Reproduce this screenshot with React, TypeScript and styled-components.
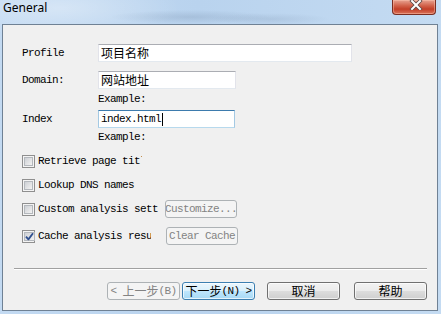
import React from 'react';
import styled, { createGlobalStyle } from 'styled-components';

const GlobalStyle = createGlobalStyle`
  html, body {
    margin: 0;
    padding: 0;
  }
  body {
    width: 441px;
    height: 314px;
    overflow: hidden;
    background: #bcd4ec;
  }
`;

const MONO = `"Liberation Mono", "Noto Sans CJK SC", monospace`;
const HAN = `"Noto Sans CJK SC", "Liberation Mono", sans-serif`;

const Window = styled.div`
  width: 441px;
  height: 314px;
  box-sizing: border-box;
  padding: 0 3px 3px 2px;
  display: flex;
  flex-direction: column;
  background:
    radial-gradient(ellipse 80px 7px at 190px 17px, rgba(70, 90, 120, .16), transparent),
    radial-gradient(ellipse 60px 6px at 270px 19px, rgba(70, 90, 120, .12), transparent),
    radial-gradient(ellipse 120px 30px at 60px 8px, rgba(255, 255, 255, .35), transparent),
    linear-gradient(90deg, #c3daf2 0%, #b9d3ee 45%, #c4dbf2 100%);
`;

const TitleBar = styled.div`
  height: 24px;
  display: flex;
  align-items: flex-start;
  justify-content: space-between;
`;

const Title = styled.div`
  font-family: "Noto Sans", "Open Sans", sans-serif;
  font-size: 12px;
  line-height: 16px;
  color: #000;
  padding: 0 0 0 1px;
`;

const CloseButton = styled.div`
  box-sizing: border-box;
  width: 44px;
  height: 15px;
  margin-right: 2px;
  border: 1px solid #7a2e22;
  border-top: none;
  border-radius: 0 0 4px 4px;
  background: linear-gradient(180deg, #e8a392 0%, #d2634c 40%, #c33f28 65%, #d9735a 100%);
  box-shadow: inset 0 0 0 1px rgba(255, 200, 180, .45);
  display: flex;
  justify-content: center;
  align-items: flex-start;
  padding-left: 3px;
`;

const Client = styled.div`
  flex: 1;
  background: #f0f0f0;
  border: 1px solid #6f8194;
  display: flex;
  flex-direction: column;
  padding: 0 10px 0 19px;
  font-family: ${MONO};
  font-size: 11px;
  letter-spacing: -0.6px;
  color: #000;
`;

const FieldRow = styled.div<{ $top: number }>`
  display: flex;
  align-items: center;
  height: 18px;
  margin-top: ${p => p.$top}px;
`;

const Label = styled.div`
  width: 76px;
  white-space: nowrap;
`;

const TextBox = styled.div<{ $width: number; $focused?: boolean }>`
  box-sizing: border-box;
  width: ${p => p.$width}px;
  height: 18px;
  background: #fff;
  border: 1px solid;
  border-color: ${p =>
    p.$focused ? '#3d7bad #a4c9e3 #b7d9ed #a4c9e3' : '#abadb3 #e2e3ea #e3e9ef #e2e3ea'};
  padding-left: 2px;
  display: flex;
  align-items: center;
  white-space: nowrap;
`;

const Han = styled.span<{ $size?: number }>`
  font-family: ${HAN};
  font-size: ${p => p.$size ?? 12}px;
  letter-spacing: 0;
  line-height: 1;
`;

const Caret = styled.span`
  display: inline-block;
  width: 1px;
  height: 13px;
  margin-left: 1px;
  background: #000;
`;

const Hint = styled.div<{ $top: number }>`
  margin: ${p => p.$top}px 0 0 76px;
  height: 14px;
  line-height: 14px;
`;

const CheckRow = styled.div<{ $top: number }>`
  display: flex;
  align-items: center;
  height: 22px;
  margin-top: ${p => p.$top}px;
`;

const Box = styled.span`
  box-sizing: border-box;
  flex: none;
  width: 13px;
  height: 13px;
  border: 1px solid #8f8f8f;
  padding: 1px;
  background: #f4f4f4;
  display: flex;
`;

const BoxFace = styled.span`
  flex: 1;
  border: 1px solid #b4b8bd;
  background: linear-gradient(135deg, #cdd0d5 0%, #e2e3e5 55%, #f3f3f3 100%);
  display: flex;
  align-items: center;
  justify-content: center;
`;

const CheckText = styled.span<{ $clip: number }>`
  width: ${p => p.$clip}px;
  margin-left: 3px;
  overflow: hidden;
  white-space: nowrap;
`;

const SmallButton = styled.button<{ $gap: number }>`
  box-sizing: border-box;
  width: 72px;
  height: 18px;
  margin-left: ${p => p.$gap}px;
  padding: 0;
  border: 1px solid #adb2b5;
  border-radius: 3px;
  background: #f4f4f4;
  color: #838383;
  font: inherit;
  letter-spacing: inherit;
  display: flex;
  align-items: center;
  justify-content: center;
  overflow: hidden;
  white-space: nowrap;
`;

const Rule = styled.div`
  margin: 21px 0 0 -8px;
  border-top: 1px solid #a0a0a0;
  border-bottom: 1px solid #fff;
`;

const ButtonBar = styled.div`
  display: flex;
  justify-content: flex-end;
  margin-top: 12px;
`;

type Variant = 'disabled' | 'default' | 'normal';

const NavButton = styled.button<{ $variant: Variant; $gap: number }>`
  box-sizing: border-box;
  width: 73px;
  height: 18px;
  margin-left: ${p => p.$gap}px;
  padding: 0;
  border: 1px solid ${p => (p.$variant === 'disabled' ? '#adb2b5' : p.$variant === 'default' ? '#3c7fb1' : '#707070')};
  border-radius: 3px;
  background: ${p =>
    p.$variant === 'disabled'
      ? '#f4f4f4'
      : p.$variant === 'default'
        ? 'linear-gradient(180deg, #eaf6fd 0%, #d9f0fc 50%, #bee6fd 51%, #a7d9f5 100%)'
        : 'linear-gradient(180deg, #f2f2f2 0%, #ebebeb 50%, #dddddd 51%, #cfcfcf 100%)'};
  box-shadow: ${p => (p.$variant === 'disabled' ? 'none' : 'inset 0 0 0 1px rgba(255, 255, 255, .7)')};
  color: ${p => (p.$variant === 'disabled' ? '#838383' : '#000')};
  font: inherit;
  letter-spacing: inherit;
  display: flex;
  align-items: center;
  justify-content: center;
  white-space: pre;
`;

const CheckMark = () => (
  <svg width="9" height="9" viewBox="0 0 9 9">
    <path d="M1 4.6 L3.4 7.4 L8 1.2" fill="none" stroke="#2f4f8f" strokeWidth="1.8" strokeLinejoin="round" />
  </svg>
);

const CloseGlyph = () => (
  <svg width="14" height="10" viewBox="0 0 14 10">
    <path d="M3 1 L11 9 M11 1 L3 9" stroke="#5a4a48" strokeWidth="3.6" strokeLinecap="square" />
    <path d="M3 1 L11 9 M11 1 L3 9" stroke="#fff" strokeWidth="2" strokeLinecap="square" />
  </svg>
);

const Check: React.FC<{ checked?: boolean }> = ({ checked }) => (
  <Box>
    <BoxFace>{checked ? <CheckMark /> : null}</BoxFace>
  </Box>
);

export default function App() {
  return (
    <>
      <GlobalStyle />
      <Window>
        <TitleBar>
          <Title>General</Title>
          <CloseButton>
            <CloseGlyph />
          </CloseButton>
        </TitleBar>
        <Client>
          <FieldRow $top={19}>
            <Label>Profile</Label>
            <TextBox $width={254}>
              <Han>项目名称</Han>
            </TextBox>
          </FieldRow>
          <FieldRow $top={9}>
            <Label>Domain:</Label>
            <TextBox $width={138}>
              <Han>网站地址</Han>
            </TextBox>
          </FieldRow>
          <Hint $top={3}>Example:</Hint>
          <FieldRow $top={4}>
            <Label>Index</Label>
            <TextBox $width={137} $focused>
              index.html<Caret />
            </TextBox>
          </FieldRow>
          <Hint $top={2}>Example:</Hint>

          <CheckRow $top={6}>
            <Check />
            <CheckText $clip={104}>Retrieve page title</CheckText>
          </CheckRow>
          <CheckRow $top={2}>
            <Check />
            <CheckText $clip={110}>Lookup DNS names</CheckText>
          </CheckRow>
          <CheckRow $top={2}>
            <Check />
            <CheckText $clip={120}>Custom analysis settings</CheckText>
            <SmallButton $gap={7} disabled>Customize...</SmallButton>
          </CheckRow>
          <CheckRow $top={5}>
            <Check checked />
            <CheckText $clip={113}>Cache analysis results</CheckText>
            <SmallButton $gap={15} disabled>Clear Cache</SmallButton>
          </CheckRow>

          <Rule />
          <ButtonBar>
            <NavButton $variant="disabled" $gap={0} disabled>
              {'< '}<Han>上一步</Han>(B)
            </NavButton>
            <NavButton $variant="default" $gap={2}>
              <Han>下一步</Han>{'(N) >'}
            </NavButton>
            <NavButton $variant="normal" $gap={12}>
              <Han>取消</Han>
            </NavButton>
            <NavButton $variant="normal" $gap={14}>
              <Han>帮助</Han>
            </NavButton>
          </ButtonBar>
        </Client>
      </Window>
    </>
  );
}
